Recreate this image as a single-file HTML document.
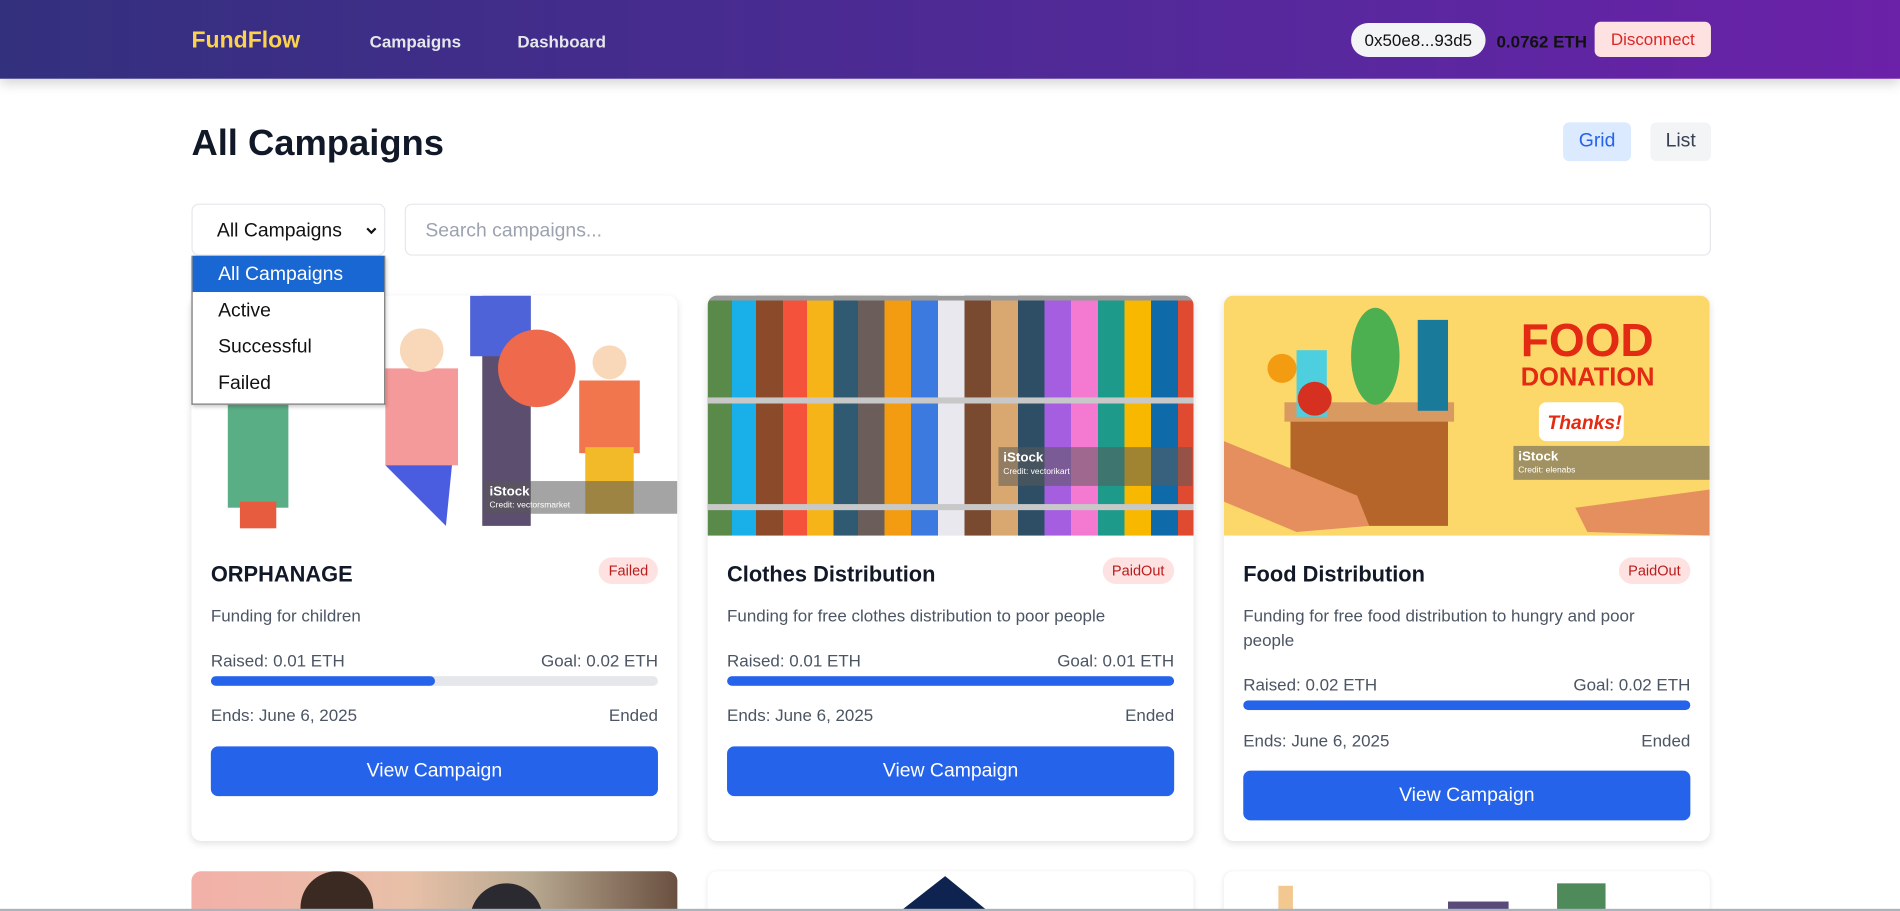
<!DOCTYPE html>
<html><head><meta charset="utf-8"><style>
*{box-sizing:border-box;margin:0;padding:0}
html,body{width:1900px;height:911px;overflow:hidden;background:#fff;font-family:"Liberation Sans",sans-serif}
#w{width:1568px;height:752px;transform:scale(1.21173);transform-origin:0 0;position:relative;background:#fff}
.hd{position:absolute;left:0;top:0;width:1568px;height:65px;background:linear-gradient(90deg,#33307e,#5b27a0 75%,#6b21a8);box-shadow:0 4px 10px rgba(0,0,0,.18)}
.abs{position:absolute}
.card{position:absolute;top:244px;width:401px;height:450px;background:#fff;border-radius:8px;box-shadow:0 2px 6px rgba(0,0,0,.12);overflow:hidden}
.img{height:198px;position:relative;overflow:hidden}
.t{position:absolute;left:16px;top:220px;font-size:18px;font-weight:bold;color:#111827}
.bd{position:absolute;right:16px;top:216px;font-size:12px;color:#b91c1c;background:#fee2e2;border-radius:12px;padding:4px 8px}
.ds{position:absolute;left:16px;right:16px;top:254px;font-size:14px;line-height:20px;color:#4b5563}
.row{position:absolute;left:16px;right:16px;display:flex;justify-content:space-between;font-size:14px;color:#4b5563}
.bar{position:absolute;left:16px;right:16px;height:8px;border-radius:4px;background:#e5e7eb;overflow:hidden}
.bar i{display:block;height:100%;background:#2563eb;border-radius:4px}
.btn{position:absolute;left:16px;right:16px;height:41px;background:#2563eb;border-radius:6px;color:#fff;font-size:16px;text-align:center;line-height:41px}
.wm{position:absolute;background:rgba(90,90,90,.55);color:#fff;font-size:11px;font-weight:bold;padding:3px 4px;line-height:12px}
.wm small{display:block;font-size:7px;font-weight:normal}
</style></head><body><div id="w">
<div class="hd">
<div class="abs" style="left:158px;top:23px;font-size:19px;font-weight:bold;color:#fcd34d">FundFlow</div>
<div class="abs" style="left:305px;top:26px;font-size:14px;font-weight:bold;color:#e5e7eb">Campaigns</div>
<div class="abs" style="left:427px;top:26px;font-size:14px;font-weight:bold;color:#e5e7eb">Dashboard</div>
<div class="abs" style="left:1115px;top:19px;width:111px;height:28px;background:#f3f4f6;border-radius:14px;font-size:14px;line-height:28px;text-align:center;color:#111">0x50e8...93d5</div>
<div class="abs" style="left:1235px;top:26px;font-size:14px;font-weight:bold;color:#111">0.0762 ETH</div>
<div class="abs" style="left:1316px;top:18px;width:96px;height:29px;background:#fee2e2;border-radius:5px;font-size:14px;line-height:29px;text-align:center;color:#dc2626">Disconnect</div>
</div>
<div class="abs" style="left:158px;top:102px;font-size:30px;font-weight:bold;color:#111827">All Campaigns</div>
<div class="abs" style="left:1290px;top:101px;width:56px;height:32px;background:#dbeafe;border-radius:5px;color:#2563eb;font-size:16px;line-height:32px;text-align:center">Grid</div>
<div class="abs" style="left:1362px;top:101px;width:50px;height:32px;background:#f3f4f6;border-radius:5px;color:#374151;font-size:16px;line-height:32px;text-align:center">List</div>
<div class="abs" style="left:158px;top:168px;width:160px;height:43px;border:1px solid #e5e7eb;border-radius:6px;font-size:16px;line-height:43px;padding-left:20px;color:#111">All Campaigns<svg style="position:absolute;right:6px;top:18px" width="9" height="7" viewBox="0 0 9 7"><path d="M1 1.5 L4.5 5 L8 1.5" stroke="#111" stroke-width="1.8" fill="none"/></svg></div>
<div class="abs" style="left:334px;top:168px;width:1078px;height:43px;border:1px solid #e5e7eb;border-radius:6px;font-size:16px;line-height:43px;padding-left:16px;color:#9ca3af">Search campaigns...</div>

<div class="card" style="left:158px"><div class="img" style="background:#fff">
<svg width="401" height="198" viewBox="0 0 401 198">
<rect x="30" y="80" width="50" height="95" fill="#5aae86"/><rect x="40" y="170" width="30" height="22" fill="#e75b3f"/>
<rect x="240" y="0" width="40" height="190" fill="#5b4e6e"/><rect x="230" y="0" width="50" height="50" fill="#4f63d8"/>
<circle cx="285" cy="60" r="32" fill="#ef6a4c"/><rect x="160" y="60" width="60" height="80" fill="#f59a9a"/>
<path d="M160 140 L215 140 L210 190 L180 160 Z" fill="#4a5ce0"/>
<rect x="320" y="70" width="50" height="60" fill="#f2764d"/><rect x="325" y="125" width="40" height="55" fill="#f2b928"/>
<circle cx="190" cy="45" r="18" fill="#f8d8b8"/><circle cx="345" cy="55" r="14" fill="#f8d8b8"/>
</svg>
<div class="wm" style="left:242px;top:153px;width:159px;height:27px">iStock<small>Credit: vectorsmarket</small></div></div>
<div class="t">ORPHANAGE</div><div class="bd">Failed</div>
<div class="ds">Funding for children</div>
<div class="row" style="top:293px"><span>Raised: 0.01 ETH</span><span>Goal: 0.02 ETH</span></div>
<div class="bar" style="top:314px"><i style="width:50%"></i></div>
<div class="row" style="top:338px"><span>Ends: June 6, 2025</span><span>Ended</span></div>
<div class="btn" style="top:372px">View Campaign</div></div>

<div class="card" style="left:584px"><div class="img" style="background:repeating-linear-gradient(90deg,#5a8a4a 0 20px,#19b0ea 20px 40px,#8b4a2a 40px 62px,#f4523a 62px 82px,#f6b418 82px 104px,#2f5a72 104px 124px,#6b5e5a 124px 146px,#f39c12 146px 168px,#3d7ae0 168px 190px,#e8e8ee 190px 212px,#7a4a30 212px 234px,#d8a870 234px 256px,#2e4e66 256px 278px,#a55ee0 278px 300px,#f37ad0 300px 322px,#1d9a8a 322px 344px,#f9b800 344px 366px,#0e6aa8 366px 388px,#e04a30 388px 401px)">
<div style="position:absolute;left:0;right:0;top:0;height:4px;background:#999"></div>
<div style="position:absolute;left:0;right:0;top:84px;height:5px;background:#c8c8c8"></div>
<div style="position:absolute;left:0;right:0;top:172px;height:5px;background:#c8c8c8"></div>
<div class="wm" style="left:240px;top:125px;width:160px;height:32px">iStock<small>Credit: vectorikart</small></div></div>
<div class="t">Clothes Distribution</div><div class="bd">PaidOut</div>
<div class="ds">Funding for free clothes distribution to poor people</div>
<div class="row" style="top:293px"><span>Raised: 0.01 ETH</span><span>Goal: 0.01 ETH</span></div>
<div class="bar" style="top:314px"><i style="width:100%"></i></div>
<div class="row" style="top:338px"><span>Ends: June 6, 2025</span><span>Ended</span></div>
<div class="btn" style="top:372px">View Campaign</div></div>

<div class="card" style="left:1010px"><div class="img" style="background:#fcd86a">
<svg width="401" height="198" viewBox="0 0 401 198">
<rect x="55" y="100" width="130" height="90" fill="#b5652a"/><rect x="50" y="88" width="140" height="16" fill="#d99a62"/>
<rect x="60" y="45" width="25" height="55" fill="#4ecfe0"/><ellipse cx="125" cy="50" rx="20" ry="40" fill="#4caf50"/>
<rect x="160" y="20" width="25" height="75" fill="#1a7a9a"/><circle cx="75" cy="85" r="14" fill="#d63020"/><circle cx="48" cy="60" r="12" fill="#f39c12"/>
<path d="M0 120 L110 165 L120 190 L60 195 L0 170Z" fill="#e58f5e"/><path d="M401 160 L290 175 L300 195 L401 198Z" fill="#e58f5e"/>
<rect x="260" y="88" width="70" height="32" rx="6" fill="#fff"/>
<text x="245" y="50" font-family="Liberation Sans" font-weight="bold" font-size="38" fill="#e32a12">FOOD</text>
<text x="245" y="74" font-family="Liberation Sans" font-weight="bold" font-size="21" fill="#e32a12">DONATION</text>
<text x="267" y="110" font-family="Liberation Sans" font-weight="bold" font-style="italic" font-size="16" fill="#e32a12">Thanks!</text>
</svg>
<div class="wm" style="left:239px;top:124px;width:162px;height:28px">iStock<small>Credit: elenabs</small></div></div>
<div class="t">Food Distribution</div><div class="bd">PaidOut</div>
<div class="ds">Funding for free food distribution to hungry and poor<br>people</div>
<div class="row" style="top:313px"><span>Raised: 0.02 ETH</span><span>Goal: 0.02 ETH</span></div>
<div class="bar" style="top:334px"><i style="width:100%"></i></div>
<div class="row" style="top:359px"><span>Ends: June 6, 2025</span><span>Ended</span></div>
<div class="btn" style="top:392px">View Campaign</div></div>

<div class="abs" style="left:158px;top:719px;width:401px;height:40px;border-radius:8px;overflow:hidden;background:linear-gradient(90deg,#f3b0a8,#e8c0a8 45%,#b8a890 70%,#6a5040)"><div style="position:absolute;left:90px;top:0;width:60px;height:40px;background:#3a2a22;border-radius:30px 30px 0 0"></div><div style="position:absolute;left:230px;top:10px;width:60px;height:40px;background:#2a2a30;border-radius:30px 30px 0 0"></div></div>
<div class="abs" style="left:584px;top:719px;width:401px;height:40px;border-radius:8px;background:#fff;box-shadow:0 1px 4px rgba(0,0,0,.1);overflow:hidden"><svg width="401" height="40"><path d="M196 4 L240 40 L150 40Z" fill="#0f2350"/></svg></div>
<div class="abs" style="left:1010px;top:719px;width:401px;height:40px;border-radius:8px;background:#fff;box-shadow:0 1px 4px rgba(0,0,0,.1);overflow:hidden"><svg width="401" height="40"><rect x="45" y="12" width="12" height="28" fill="#f2c890"/><rect x="185" y="25" width="50" height="15" fill="#5a4a7a"/><rect x="275" y="10" width="40" height="30" fill="#4f8a5a"/></svg></div>
<div class="abs" style="left:0;top:750px;width:1568px;height:2px;background:#a9b4bd"></div>

<div class="abs" style="left:158px;top:211px;width:160px;height:123px;background:#fff;border:1px solid #767676;border-top:none;box-shadow:1px 2px 3px rgba(0,0,0,.2);font-size:16px;color:#111">
<div style="height:30px;line-height:32px;padding-left:21px;background:#1967d2;color:#fff">All Campaigns</div>
<div style="height:30px;line-height:32px;padding-left:21px">Active</div>
<div style="height:30px;line-height:32px;padding-left:21px">Successful</div>
<div style="height:30px;line-height:32px;padding-left:21px">Failed</div>
</div>
</div></body></html>
